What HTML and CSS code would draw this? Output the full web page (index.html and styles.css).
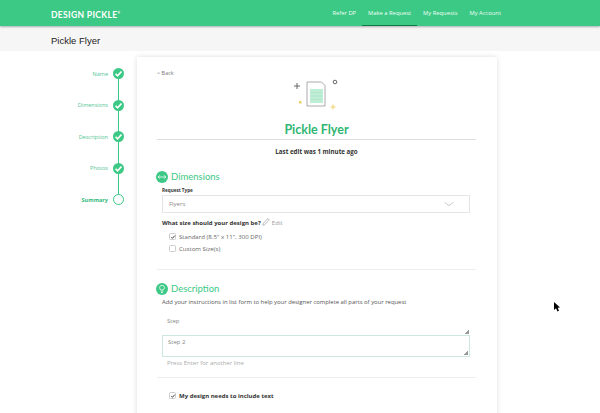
FILE: index.html
```html
<!DOCTYPE html>
<html lang="en">
<head>
  <meta charset="UTF-8">
  <title>Pickle Flyer</title>
  <link rel="stylesheet" href="styles.css">
</head>
<body>
  <header class="topbar">
    <div class="logo">DESIGN PICKLE<sup>®</sup></div>
    <nav class="nav">
      <a href="#">Refer DP</a>
      <a href="#" class="current">Make a Request</a>
      <a href="#">My Requests</a>
      <a href="#">My Account</a>
    </nav>
  </header>
  <div class="titlebar"><h1>Pickle Flyer</h1></div>

  <div class="layout">
    <ol class="steps">
      <li class="step"><span class="step-name">Name</span><span class="tick"><svg viewBox="0 0 12 12"><path d="M2.8 6.3 5 8.500 9.300 3.800"/></svg></span></li>
      <li class="step"><span class="step-name">Dimensions</span><span class="tick"><svg viewBox="0 0 12 12"><path d="M2.8 6.3 5 8.500 9.300 3.800"/></svg></span></li>
      <li class="step"><span class="step-name">Description</span><span class="tick"><svg viewBox="0 0 12 12"><path d="M2.8 6.3 5 8.500 9.300 3.800"/></svg></span></li>
      <li class="step"><span class="step-name">Photos</span><span class="tick"><svg viewBox="0 0 12 12"><path d="M2.8 6.3 5 8.500 9.300 3.800"/></svg></span></li>
      <li class="step step-now"><span class="step-name">Summary</span><span class="tick"></span></li>
    </ol>

    <main class="card">
      <a href="#" class="back">&lt; Back</a>
      <svg class="flyer" viewBox="0 0 70 50" width="70" height="50">
        <path class="plus" d="M17 13v6M14 16h6"/>
        <path class="sheet" d="M27 12h14.500l3.500 3.500V36H27z"/>
        <rect class="print" x="30" y="19" width="13" height="14"/>
        <path class="print-lines" d="M31 22.500h11M31 26h11M31 29.500h11"/>
        <circle class="ring" cx="55" cy="12" r="1.800"/>
        <rect class="spot" x="19" y="31" width="2.500" height="2.500"/>
        <path class="spark" d="M53 34.500v5M50.500 37h5"/>
      </svg>
      <h2 class="card-title">Pickle Flyer</h2>
      <p class="edited">Last edit was 1 minute ago</p>

      <section class="part">
        <h3 class="part-head">
          <span class="badge"><svg viewBox="0 0 14 14"><path d="M2.500 7h9M4.500 5 2.500 7l2 2M9.500 5l2 2-2 2"/></svg></span>
          Dimensions
        </h3>
        <label class="field-label">Request Type</label>
        <div class="select">Flyers<svg viewBox="0 0 10 4" width="10" height="4"><path d="M.5 .3 5 3.600 9.500 .3"/></svg></div>
        <p class="question">What size should your design be? <span class="edit"><svg viewBox="0 0 10 10" width="8" height="8"><path d="M1 9l.6-2.500L7.500 .8l1.700 1.700L3.300 8.400z"/></svg> Edit</span></p>
        <div class="option"><span class="box"><svg viewBox="0 0 8 8"><path d="M1.800 4.200 3.300 5.800 6.300 2.200"/></svg></span>Standard (8.5" x 11", 300 DPI)</div>
        <div class="option"><span class="box"></span>Custom Size(s)</div>
      </section>

      <section class="part">
        <h3 class="part-head">
          <span class="badge"><svg viewBox="0 0 14 14"><circle cx="7" cy="5.500" r="2.800"/><path d="M5.500 9.500h3M5.800 11.200h2.400"/></svg></span>
          Description
        </h3>
        <p class="hint">Add your instructions in list form to help your designer complete all parts of your request</p>
        <textarea class="line line-plain">Step</textarea>
        <textarea class="line line-focus">Step 2</textarea>
        <p class="press">Press Enter for another line</p>
      </section>

      <div class="include"><span class="box"><svg viewBox="0 0 8 8"><path d="M1.800 4.200 3.300 5.800 6.300 2.200"/></svg></span>My design needs to include text</div>
    </main>
  </div>

  <svg class="cursor" viewBox="0 0 8 12" width="8" height="12"><path d="M1 1v8l2-1.800L4.500 10.500l1.500-.7L4.700 6.800 7 6.500z"/></svg>
</body>
</html>
```

FILE: styles.css
```css
body {
  margin: 0;
  height: 413px;
  overflow: hidden;
  background: #fff;
  color: #333;
  font-family: 'Open Sans', sans-serif;
}
.topbar {
  height: 26px;
  background: #3cc885;
  box-shadow: 0 1px 2px rgba(0,0,0,0.3);
  display: flex;
  justify-content: space-between;
  position: relative;
}
.logo {
  margin-left: 51px;
  color: #fff;
  font: 700 8.6px/26px 'Lato', sans-serif;
  letter-spacing: 0.3px;
}
.logo sup { font-size: 3px; }
.nav {
  display: flex;
  margin-right: 93px;
}
.nav a {
  padding: 0 6px;
  color: #f0fff6;
  font-size: 5.800px;
  line-height: 27px;
  text-decoration: none;
}
.nav a.current { border-bottom: 1.500px solid #0f7a48; height: 24.500px; }
.titlebar {
  height: 25px;
  background: #f6f6f6;
  padding-left: 51px;
}
.titlebar h1 {
  margin: 0;
  font: 400 9.500px/30px 'Liberation Sans', sans-serif;
  color: #222;
}
.layout {
  display: flex;
  padding-top: 6px;
}
.steps {
  width: 124px;
  margin: 0;
  padding: 1px 0 0;
  list-style: none;
}
.step {
  height: 31.500px;
  display: flex;
  justify-content: flex-end;
  align-items: center;
  gap: 5px;
  position: relative;
  color: #55c595;
  font-size: 5.500px;
}
.step:not(:last-child)::after {
  content: '';
  position: absolute;
  right: 5px;
  top: 16px;
  width: 1.500px;
  height: 31.500px;
  background: #3cc885;
}
.tick {
  width: 11px;
  height: 11px;
  border-radius: 50%;
  background: #3cc885;
  display: flex;
  position: relative;
  z-index: 1;
}
.tick svg {
  width: 11px;
  height: 11px;
  fill: none;
  stroke: #fff;
  stroke-width: 1.800;
}
.step-now .step-name { font-weight: 700; color: #33b97b; }
.step-now .tick {
  box-sizing: border-box;
  background: #fff;
  border: 1px solid #3cc885;
}
.card {
  width: 319px;
  height: 360px;
  margin-left: 13px;
  padding: 12px 21px 0 20px;
  box-shadow: 0 0 5px rgba(0,0,0,0.14);
}
.back {
  display: block;
  height: 8px;
  color: #777;
  font-size: 5.500px;
  line-height: 8px;
  text-decoration: none;
}
.flyer { display: block; margin: -7px 0 0 123px; }
.plus { fill: none; stroke: #666; stroke-width: 1; }
.sheet { stroke: #888; fill: #fff; stroke-width: 0.700; }
.print { fill: #bfeed6; }
.print-lines { fill: none; stroke: #a6dcc2; stroke-width: 0.500; }
.ring { fill: none; stroke: #555; stroke-width: 0.900; }
.spot { fill: #e8d26a; }
.spark { fill: none; stroke: #eed06c; stroke-width: 1; }
.card-title {
  margin: 1px 0 0;
  padding-bottom: 1px;
  border-bottom: 1px solid #ddd;
  text-align: center;
  color: #2fb673;
  font: 700 12.500px/17px 'Lato', sans-serif;
}
.edited {
  margin: 7px 0 0;
  text-align: center;
  font-size: 6.200px;
  font-weight: 700;
  color: #333;
}
.part {
  padding: 14px 0 16.500px;
  border-bottom: 1px solid #eee;
}
.part-head {
  margin: 0 0 0 -1px;
  display: flex;
  align-items: center;
  gap: 3px;
  color: #3cc885;
  font: 400 9.500px/13px 'Lato', sans-serif;
}
.badge {
  width: 12px;
  height: 12px;
  border-radius: 50%;
  background: #3cc885;
  display: flex;
}
.badge svg {
  width: 12px;
  height: 12px;
  fill: none;
  stroke: #fff;
  stroke-width: 0.900;
}
.field-label {
  display: block;
  margin: 4px 0 0 5px;
  font-size: 4.600px;
  font-weight: 700;
  color: #333;
}
.select {
  margin: 2px 0 0 5px;
  width: 308px;
  height: 18px;
  box-sizing: border-box;
  border: 1px solid #e4e4e4;
  padding: 0 15px 0 6px;
  display: flex;
  justify-content: space-between;
  align-items: center;
  color: #888;
  font-size: 6px;
}
.select svg { fill: none; stroke: #aaa; stroke-width: 0.600; }
.question {
  margin: 5px 0 0 5px;
  font-size: 6px;
  font-weight: 700;
  color: #333;
}
.edit {
  font-weight: 400;
  color: #999;
}
.edit svg { fill: none; stroke: #888; stroke-width: 0.700; vertical-align: -1px; }
.option {
  margin: 5px 0 0 12px;
  height: 8px;
  display: flex;
  align-items: center;
  gap: 3px;
  color: #666;
  font-size: 6.100px;
}
.option + .option { margin-top: 4px; }
.box {
  width: 7px;
  height: 7px;
  box-sizing: border-box;
  flex: none;
  border: 0.500px solid #ccc;
  border-radius: 1.500px;
  background: #fff;
}
.box svg { display: block; width: 6px; height: 6px; fill: none; stroke: #333; stroke-width: 1.200; }
.hint { margin: 3px 0 0 5px; font-size: 5.900px; color: #555; }
.line {
  display: block;
  margin-left: 5px;
  width: 308px;
  box-sizing: border-box;
  padding: 2px 5px;
  overflow: hidden;
  resize: vertical;
  outline: none;
  background: #fff;
  color: #888;
  font: 6px/8px 'Open Sans', sans-serif;
}
.line::-webkit-resizer {
  background: linear-gradient(135deg, transparent 50%, #999 50%) no-repeat right 1px bottom 1px / 4px 4px;
}
.line-plain {
  margin-top: 8px;
  height: 21px;
  padding-top: 3px;
  border: 0;
}
.line-focus {
  height: 22px;
  border: 1px solid #cfe8de;
}
.press { margin: 2px 0 0 10px; color: #aaa; font-size: 6px; }
.part + .part { padding: 12.500px 0 10px; }
.include {
  margin: 13.500px 0 0 12px;
  display: flex;
  align-items: center;
  gap: 3px;
  font-size: 6px;
  font-weight: 700;
}
.cursor {
  position: absolute;
  left: 553px;
  top: 301px;
}
```
